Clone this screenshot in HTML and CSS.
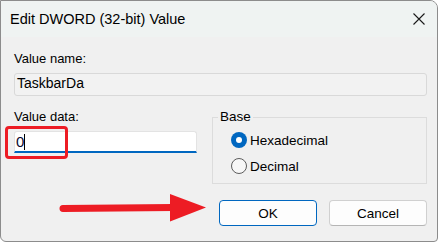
FILE: index.html
```html
<!DOCTYPE html>
<html>
<head>
<meta charset="utf-8">
<link rel="stylesheet" href="styles.css">
</head>
<body>
<div class="window">
  <div class="titlebar">
    <span class="title">Edit DWORD (32-bit) Value</span>
    <svg class="close" width="12" height="12" viewBox="0 0 12 12"><path d="M0.5 0.5 L11.5 11.5 M11.5 0.5 L0.5 11.5" stroke="#1a1a1a" stroke-width="1.1" fill="none"/></svg>
  </div>
  <div class="content">
    <div class="label">Value name:</div>
    <div class="field field-name">TaskbarDa</div>
    <div class="row">
      <div class="col">
        <div class="label">Value data:</div>
        <div class="field field-data"><span class="digit">0</span><span class="caret"></span></div>
      </div>
      <fieldset class="group">
        <legend>Base</legend>
        <div class="radio"><span class="dot dot-on"></span><span>Hexadecimal</span></div>
        <div class="radio"><span class="dot"></span><span>Decimal</span></div>
      </fieldset>
    </div>
    <div class="buttons">
      <div class="btn btn-primary">OK</div>
      <div class="btn">Cancel</div>
    </div>
  </div>
  <div class="highlight"></div>
  <svg class="arrow" width="438" height="242" viewBox="0 0 438 242">
    <path d="M63 208.5 L173 207.5" stroke="#ed1c24" stroke-width="7" stroke-linecap="round" fill="none"/>
    <polygon points="170,194 206,207.5 170,221.5" fill="#ed1c24"/>
  </svg>
</div>
</body>
</html>
```
FILE: styles.css
```css
html, body {
  margin: 0;
  padding: 0;
  background: #ffffff;
}
body {
  font-family: "Liberation Sans", Arial, sans-serif;
  color: #000;
}
.window {
  position: relative;
  width: 438px;
  height: 242px;
  box-sizing: border-box;
  border: 1px solid #8c8c8c;
  border-top-right-radius: 8px;
  border-bottom-right-radius: 4px;
  border-bottom-left-radius: 6px;
  background: #f0f0f0;
  overflow: hidden;
}
.titlebar {
  height: 36px;
  background: #eff3f2;
  display: flex;
  align-items: center;
  justify-content: space-between;
  padding: 0 12px 0 9px;
}
.title {
  font-size: 14.5px;
  line-height: 18px;
  color: #000;
}
.close {
  display: block;
}
.content {
  padding: 14px 10px 0 13px;
}
.label {
  font-size: 13px;
  line-height: 16px;
  margin-bottom: 6px;
}
.field {
  box-sizing: border-box;
  display: flex;
  align-items: center;
  color: #000;
}
.field-name {
  height: 23px;
  font-size: 14px;
  padding: 0 0 3px 2px;
  border: 1px solid #d9d9d9;
  border-radius: 3px;
  background: #f2f2f2;
}
.row {
  margin-top: 13px;
  display: grid;
  grid-template-columns: 183px 1fr;
  column-gap: 15px;
  align-items: start;
}
.field-data {
  height: 22px;
  padding-left: 1px;
  background: #ffffff;
  border: 1px solid #e3e3e3;
  border-bottom: 2px solid #0067c0;
  border-radius: 3px 3px 0 0;
}
.digit {
  font-size: 15px;
  color: #0a0a30;
}
.caret {
  display: inline-block;
  width: 1px;
  height: 16px;
  background: #000;
}
.group {
  margin: 0;
  min-width: 0;
  padding: 5px 10px 7px 18px;
  border: 1px solid #dcdcdc;
}
.group legend {
  font-size: 13.5px;
  line-height: 16px;
  padding: 0 2px;
  margin-left: -13px;
}
.radio {
  height: 20px;
  display: flex;
  align-items: center;
  gap: 3px;
  font-size: 13.5px;
}
.radio + .radio {
  margin-top: 6px;
}
.dot {
  box-sizing: border-box;
  width: 16px;
  height: 16px;
  border-radius: 50%;
  border: 1px solid #5c5c5c;
  background: #f7f7f7;
  display: flex;
  align-items: center;
  justify-content: center;
}
.dot-on {
  border: none;
  background: #0067c0;
}
.dot-on::after {
  content: "";
  width: 6px;
  height: 6px;
  border-radius: 50%;
  background: #ffffff;
}
.buttons {
  margin-top: 16px;
  display: flex;
  justify-content: flex-end;
  gap: 12px;
}
.btn {
  box-sizing: border-box;
  width: 98px;
  height: 26px;
  display: flex;
  align-items: center;
  justify-content: center;
  font-size: 13.5px;
  background: #fdfdfd;
  border: 1px solid #d0d0d0;
  border-bottom-color: #b5b5b5;
  border-radius: 4px;
}
.btn-primary {
  border: 1px solid #0067c0;
}
.highlight {
  position: absolute;
  left: 4px;
  top: 125px;
  width: 63px;
  height: 33px;
  box-sizing: border-box;
  border: 3px solid #ed1c24;
  border-radius: 4px;
}
.arrow {
  position: absolute;
  left: -1px;
  top: -1px;
}
```
